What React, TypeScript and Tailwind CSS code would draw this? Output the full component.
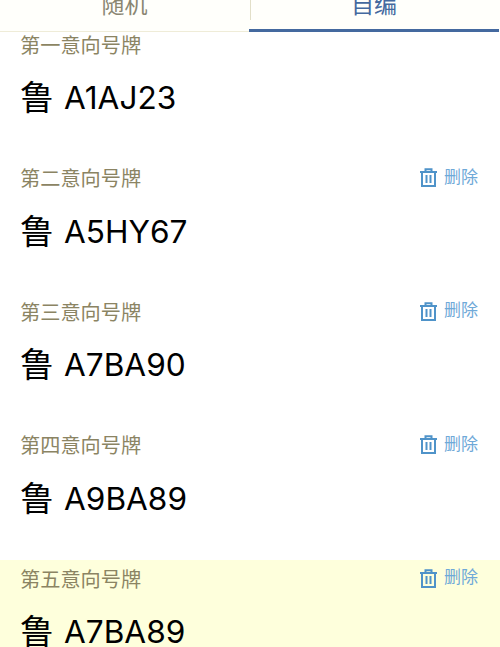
const plates = [
  { label: "第一意向号牌", plate: "A1AJ23", removable: false },
  { label: "第二意向号牌", plate: "A5HY67", removable: true },
  { label: "第三意向号牌", plate: "A7BA90", removable: true },
  { label: "第四意向号牌", plate: "A9BA89", removable: true },
  { label: "第五意向号牌", plate: "A7BA89", removable: true, active: true },
];

const TrashIcon = () => (
  <svg width="17" height="19" viewBox="0 0 17 19" fill="none" stroke="#4f93c9" strokeWidth="2">
    <path d="M0 4h17" />
    <path d="M5.5 4V1.2h6V4" />
    <path d="M2 4v14h13V4" />
    <path d="M6.5 7v8" />
    <path d="M10.5 7v8" />
  </svg>
);

export default function App() {
  return (
    <div
      className="flex h-[647px] w-[500px] flex-col overflow-hidden bg-white"
      style={{ fontFamily: '"Inter", "Noto Sans CJK SC", sans-serif' }}
    >
      <div className="relative z-10 flex h-[32px] shrink-0 bg-[#fffffb] pr-[1px]">
        <div className="flex w-[249px] items-end justify-center overflow-hidden border-b border-[#efecd8] pb-[11px] text-[23px] leading-[30px] text-[#8a8672]">
          随机
        </div>
        <div className="absolute left-[250px] top-0 h-[20px] w-px bg-[#e2dfc8]" />
        <div className="flex flex-1 items-end justify-center overflow-hidden border-b-[3px] border-[#44699f] pb-[9px] text-[23px] leading-[30px] text-[#44699f]">
          自编
        </div>
      </div>

      <div className="-mt-[6px] flex flex-col">
        {plates.map((item) => (
          <div
            key={item.label}
            className={`h-[133.5px] shrink-0 pl-[20px] pr-[22px] ${item.active ? "bg-[#feffdc]" : ""}`}
          >
            <div className="flex h-[40px] items-center justify-between">
              <span className="text-[20.2px] text-[#8b8463]">{item.label}</span>
              {item.removable && (
                <div className="flex -translate-y-[2px] items-center gap-[7px]">
                  <TrashIcon />
                  <span className="text-[17px] text-[#6fa9d8]">删除</span>
                </div>
              )}
            </div>
            <div className="flex h-[64px] items-center gap-[10px] text-black">
              <span className="text-[34px] leading-none">鲁</span>
              <span className="text-[31.6px] leading-none">{item.plate}</span>
            </div>
          </div>
        ))}
      </div>
    </div>
  );
}
